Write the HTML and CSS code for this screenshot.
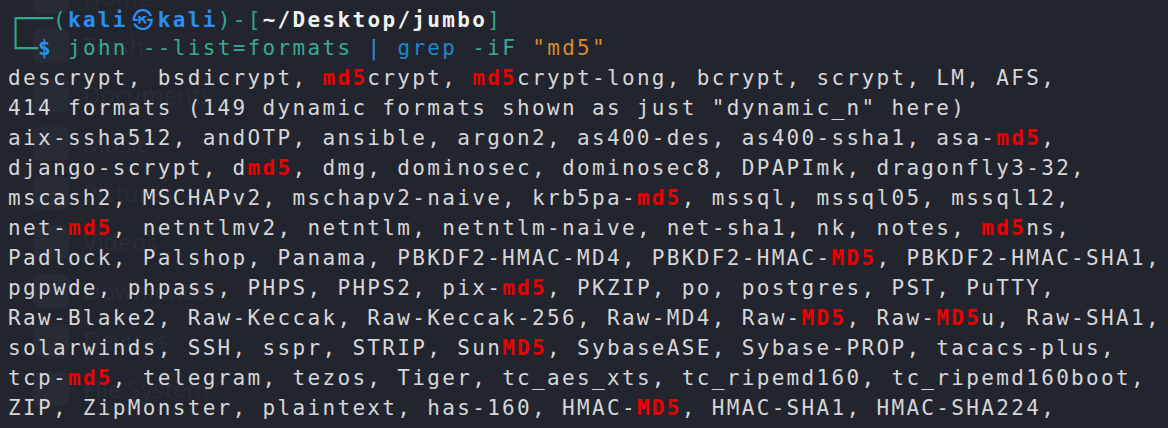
FILE: index.html
```html
<!DOCTYPE html>
<html lang="en">
<head>
<meta charset="utf-8">
<title>Terminal - john --list=formats</title>
<link rel="stylesheet" href="styles.css">
</head>
<body>
<div class="desktop" aria-hidden="true">
  <div class="dicon"><span class="dglyph"></span><span class="dlabel">Home</span></div>
  <div class="dicon"><span class="dglyph"></span><span class="dlabel">Trash</span></div>
  <div class="dicon"><span class="dglyph"></span><span class="dlabel">Documents</span></div>
  <div class="dicon"><span class="dglyph"></span><span class="dlabel">Music</span></div>
  <div class="dicon"><span class="dglyph"></span><span class="dlabel">Pictures</span></div>
  <div class="dicon"><span class="dglyph"></span><span class="dlabel">Videos</span></div>
  <div class="dicon"><span class="dglyph"></span><span class="dlabel">Downloads</span></div>
  <div class="dicon"><span class="dglyph"></span><span class="dlabel">Devices</span></div>
  <div class="dicon"><span class="dglyph"></span><span class="dlabel">File System</span></div>
</div>
<main class="term">
<div class="line"><span class="box box3">┌──</span><span class="g">(</span><span class="u">kali<span class="at">㉿</span>kali</span><span class="g">)-[</span><span class="w">~/Desktop/jumbo</span><span class="g">]</span></div>
<div class="line"><span class="box box2">└─</span><span class="u">$</span> <span class="c">john</span> <span class="c">--list=formats</span> <span class="pipe">|</span> <span class="grep">grep</span> <span class="c">-iF</span> <span class="str">"md5"</span></div>
<div class="line">descrypt, bsdicrypt, <b class="m">md5</b>crypt, <b class="m">md5</b>crypt-long, bcrypt, scrypt, LM, AFS,</div>
<div class="line">414 formats (149 dynamic formats shown as just "dynamic_n" here)</div>
<div class="line">aix-ssha512, andOTP, ansible, argon2, as400-des, as400-ssha1, asa-<b class="m">md5</b>,</div>
<div class="line">django-scrypt, d<b class="m">md5</b>, dmg, dominosec, dominosec8, DPAPImk, dragonfly3-32,</div>
<div class="line">mscash2, MSCHAPv2, mschapv2-naive, krb5pa-<b class="m">md5</b>, mssql, mssql05, mssql12,</div>
<div class="line">net-<b class="m">md5</b>, netntlmv2, netntlm, netntlm-naive, net-sha1, nk, notes, <b class="m">md5</b>ns,</div>
<div class="line">Padlock, Palshop, Panama, PBKDF2-HMAC-MD4, PBKDF2-HMAC-<b class="m">MD5</b>, PBKDF2-HMAC-SHA1,</div>
<div class="line">pgpwde, phpass, PHPS, PHPS2, pix-<b class="m">md5</b>, PKZIP, po, postgres, PST, PuTTY,</div>
<div class="line">Raw-Blake2, Raw-Keccak, Raw-Keccak-256, Raw-MD4, Raw-<b class="m">MD5</b>, Raw-<b class="m">MD5</b>u, Raw-SHA1,</div>
<div class="line">solarwinds, SSH, sspr, STRIP, Sun<b class="m">MD5</b>, SybaseASE, Sybase-PROP, tacacs-plus,</div>
<div class="line">tcp-<b class="m">md5</b>, telegram, tezos, Tiger, tc_aes_xts, tc_ripemd160, tc_ripemd160boot,</div>
<div class="line">ZIP, ZipMonster, plaintext, has-160, HMAC-<b class="m">MD5</b>, HMAC-SHA1, HMAC-SHA224,</div>
</main>
</body>
</html>
```
FILE: styles.css
```css
html, body {
  margin: 0;
  padding: 0;
}

body {
  width: 1168px;
  height: 428px;
  overflow: hidden;
  background: #23252e;
  position: relative;
}

/* faint desktop icons showing through the translucent terminal */
.desktop {
  position: absolute;
  left: 33px;
  top: -28px;
  display: flex;
  flex-direction: column;
  z-index: 0;
}

.dicon {
  height: 49px;
  display: flex;
  align-items: center;
  gap: 14px;
}

.dglyph {
  width: 36px;
  height: 34px;
  border-radius: 6px;
  background: rgba(120, 150, 200, 0.05);
}

.dlabel {
  font-family: "Noto Sans", sans-serif;
  font-size: 24px;
  color: rgba(150, 170, 210, 0.06);
}

.term {
  position: relative;
  z-index: 1;
  padding: 3px 0 0 8px;
  font-family: "DejaVu Sans Mono", monospace;
  font-size: 21px;
  letter-spacing: 2.33px;
  color: #d6d6d8;
}

.line {
  height: 30px;
  line-height: 30px;
  white-space: pre;
}

/* box-drawing prompt corners: stretched so they join across lines and cells */
.box {
  display: inline-block;
  vertical-align: top;
  height: 30px;
  line-height: 30px;
  letter-spacing: 0;
  color: #31a88b;
  transform: scale(1.185, 1.24);
  transform-origin: 0 50%;
}

.box3 { width: 44.95px; }
.box2 { width: 29.97px; }

.g { color: #31a88b; }

.u {
  color: #2b8ef0;
  font-weight: bold;
}

.at {
  display: inline-block;
  width: 29.97px;
  text-align: center;
  letter-spacing: 0;
  font-family: "Noto Sans CJK KR", "Noto Sans CJK JP", sans-serif;
  font-weight: bold;
  font-size: 21px;
}

.w {
  color: #f2f2f2;
  font-weight: bold;
}

.c { color: #3aa991; }

.pipe { color: #2b8ef0; }

.grep { color: #1a8ac9; }

.str { color: #d68b30; }

.m {
  color: #ee0000;
  font-weight: bold;
}
```
